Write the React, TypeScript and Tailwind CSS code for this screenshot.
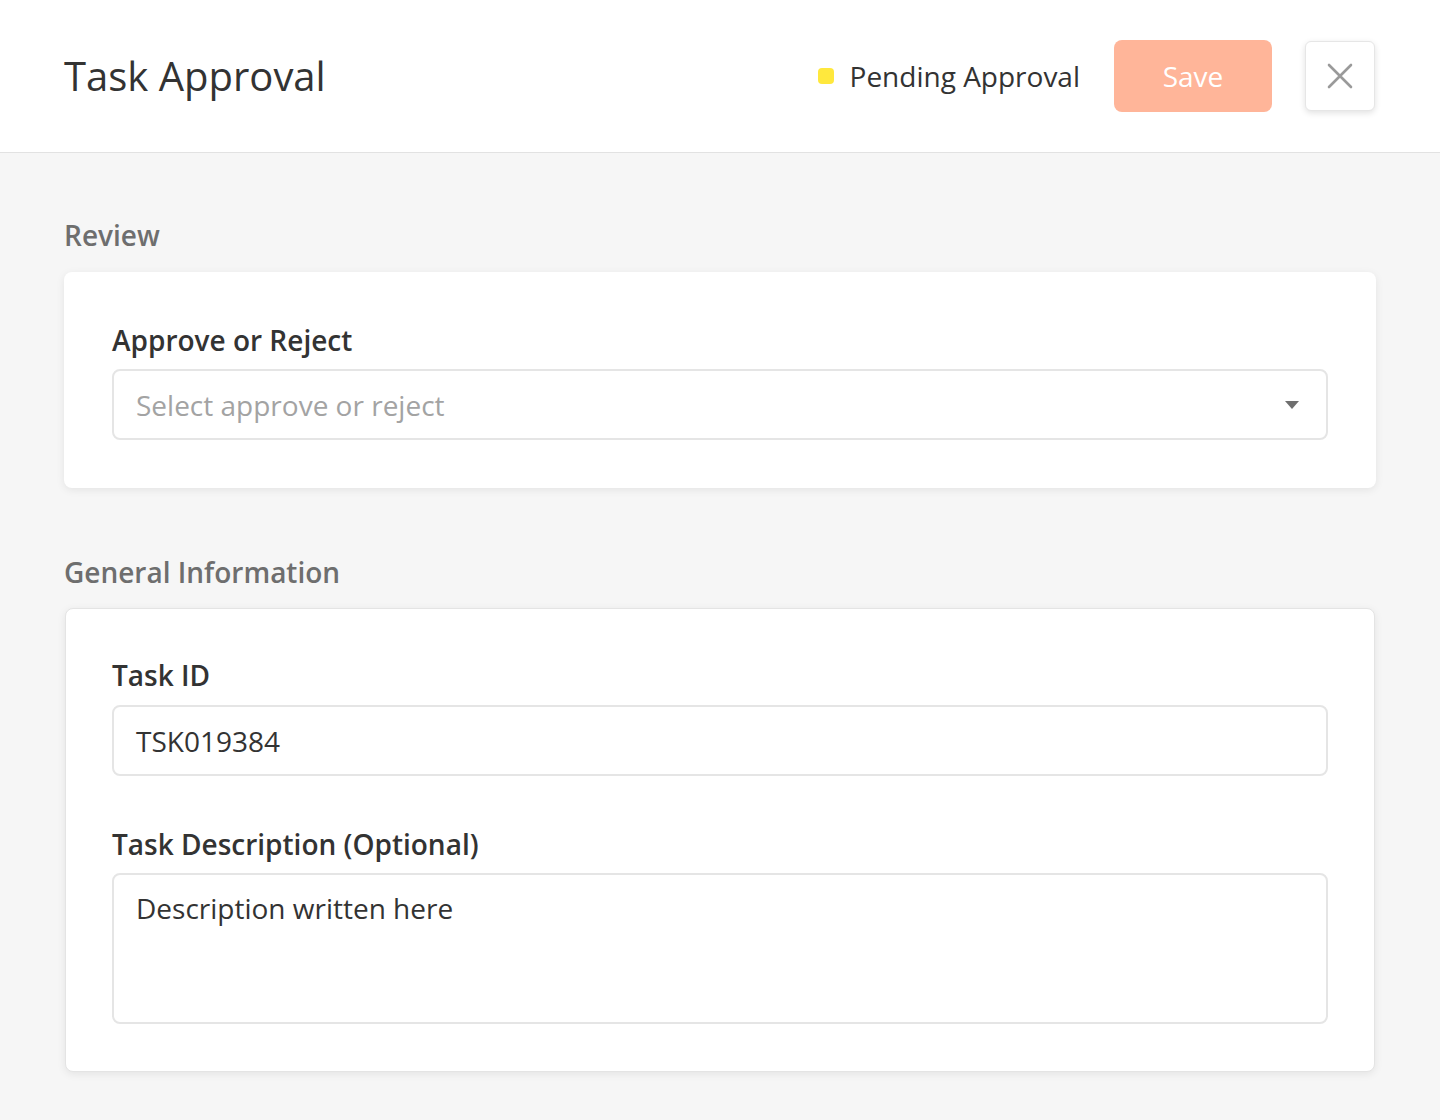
export default function App() {
  return (
    <div
      className="min-h-[1120px] bg-[#f6f6f6] text-[#333333]"
      style={{ fontFamily: '"Open Sans", "Noto Sans", sans-serif' }}
    >
      <header className="flex h-[153px] items-center justify-between border-b border-[#e2e2e2] bg-white pl-16 pr-[65px]">
        <h1 className="text-[40px] font-normal leading-none text-[#333333]">Task Approval</h1>
        <div className="flex items-center">
          <div className="flex items-center gap-4">
            <span className="h-4 w-4 rounded-[4px] bg-[#ffe83d]" />
            <span className="text-[28px] leading-none text-[#333333]">Pending Approval</span>
          </div>
          <button className="ml-[34px] h-[72px] w-[158px] rounded-lg bg-[#ffb599] text-[28px] text-white">
            Save
          </button>
          <button className="ml-[33px] flex h-[70px] w-[70px] items-center justify-center rounded-md border border-[#e6e6e6] bg-white shadow-[0_2px_6px_rgba(0,0,0,0.12)]">
            <svg width="26" height="26" viewBox="0 0 26 26" fill="none" stroke="#9a9a9a" strokeWidth="2.6" strokeLinecap="round">
              <path d="M2 2 L24 24 M24 2 L2 24" />
            </svg>
          </button>
        </div>
      </header>

      <main className="px-16 pb-12 pt-[62px]">
        <section>
          <h2 className="text-[28px] font-semibold leading-[40px] text-[#6e6e6e]">Review</h2>
          <div className="mt-[17px] rounded-lg bg-white px-12 pb-12 pt-12 shadow-[0_2px_8px_rgba(0,0,0,0.08)]">
            <label className="block text-[28px] font-semibold leading-[40px] text-[#333333]">Approve or Reject</label>
            <div className="mt-[9px] flex h-[71px] items-center justify-between rounded-lg border-2 border-[#e5e5e5] bg-white pl-[22px] pr-[26px]">
              <span className="text-[28px] text-[#a3a3a3]">Select approve or reject</span>
              <svg width="16" height="10" viewBox="0 0 16 10">
                <path d="M1 1 H15 L8 9 Z" fill="#6f6f6f" />
              </svg>
            </div>
          </div>
        </section>

        <section className="mt-16">
          <h2 className="text-[28px] font-semibold leading-[40px] text-[#6e6e6e]">General Information</h2>
          <div className="mx-px mt-4 rounded-lg border border-[#e4e4e4] bg-white px-[46px] pb-[47px] pt-[46px] shadow-[0_2px_8px_rgba(0,0,0,0.08)]">
            <label className="block text-[28px] font-semibold leading-[40px] text-[#333333]">Task ID</label>
            <div className="mt-[10px] flex h-[71px] items-center rounded-lg border-2 border-[#e5e5e5] bg-white pl-[22px]">
              <span className="text-[28px] text-[#333333]">TSK019384</span>
            </div>

            <label className="mt-12 block text-[28px] font-semibold leading-[40px] text-[#333333]">
              Task Description (Optional)
            </label>
            <div className="mt-[9px] h-[151px] rounded-lg border-2 border-[#e5e5e5] bg-white pl-[22px] pt-[13px]">
              <span className="text-[28px] leading-[40px] text-[#333333]">Description written here</span>
            </div>
          </div>
        </section>
      </main>
    </div>
  )
}
